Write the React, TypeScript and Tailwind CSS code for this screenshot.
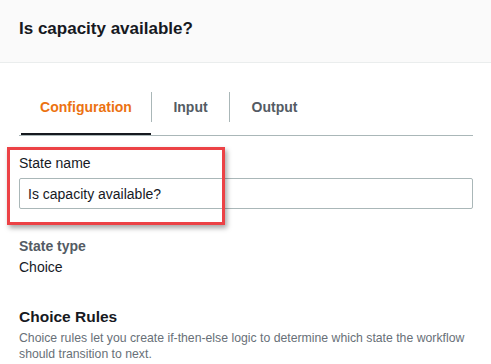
import React, { useState } from 'react';

const tabs = [
  { label: 'Configuration', width: 'w-[130px]' },
  { label: 'Input', width: 'w-[77px]' },
  { label: 'Output', width: 'w-[89px]' },
];

const App: React.FC = () => {
  const [activeTab, setActiveTab] = useState<string>('Configuration');
  const [stateName, setStateName] = useState<string>('Is capacity available?');

  return (
    <div className="w-[491px] h-[364px] overflow-hidden bg-white text-[#16191f] font-['Liberation_Sans',Arial,sans-serif]">
      {/* En-tête */}
      <div className="h-[63px] bg-[#fafafa] border-b border-[#eaeded] px-[19px] pt-[17px]">
        <h1 className="text-[17px] leading-6 font-bold">Is capacity available?</h1>
      </div>

      <div className="px-[19px] pr-[18px]">
        {/* Onglets */}
        <div className="mt-[29px] flex border-b border-[#aab7b8] pl-[2px]">
          {tabs.map((tab, index) => (
            <React.Fragment key={tab.label}>
              {index > 0 && <span className="w-px h-[30px] bg-[#aab7b8]" />}
              <button
                onClick={() => setActiveTab(tab.label)}
                className={`${tab.width} h-[43px] flex flex-col text-sm font-bold ${
                  activeTab === tab.label ? 'text-[#ec7211]' : 'text-[#545b64]'
                }`}
              >
                <span className="h-[30px] flex items-center justify-center w-full">{tab.label}</span>
                <span
                  className={`mt-auto h-[2px] w-full ${activeTab === tab.label ? 'bg-[#16191f]' : 'bg-transparent'}`}
                />
              </button>
            </React.Fragment>
          ))}
        </div>

        {/* Nom de l'état */}
        <div className="relative mt-[17px]">
          <label className="block text-sm leading-5">State name</label>
          <input
            value={stateName}
            onChange={e => setStateName(e.target.value)}
            className="mt-[5px] block w-full h-[31px] border border-[#aab7b8] rounded-[2px] px-2 text-sm text-[#16191f] outline-none"
          />
          <div className="absolute left-[-12px] top-[-6px] w-[218px] h-[78px] border-[3px] border-[#ec4246] shadow-[2px_3px_5px_rgba(0,0,0,0.35)] pointer-events-none" />
        </div>

        {/* Type d'état */}
        <div className="mt-[27px] text-sm leading-5">
          <div className="font-bold text-[#545b64]">State type</div>
          <div className="mt-px">Choice</div>
        </div>

        {/* Règles de choix */}
        <h2 className="mt-[28px] text-[15.5px] leading-6 font-bold">Choice Rules</h2>
        <p className="mt-px text-[12.25px] leading-4 text-[#687078]">
          Choice rules let you create if-then-else logic to determine which state the workflow should transition to next.
        </p>
      </div>
    </div>
  );
};

export default App;
